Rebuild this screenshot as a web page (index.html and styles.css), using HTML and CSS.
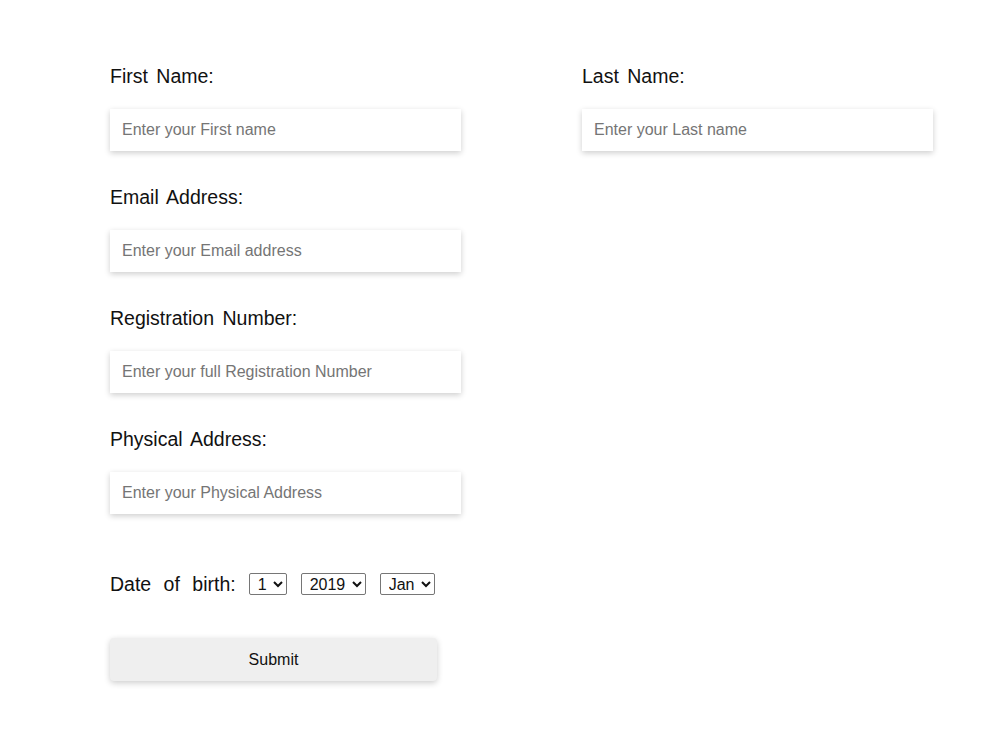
FILE: index.html
```html
<!DOCTYPE html>
<html>
<head>
<meta charset="utf-8">
<link rel="stylesheet" href="styles.css">
</head>
<body>
<form class="form">
  <div class="grid">
    <div class="field">
      <label class="label">First Name:</label>
      <input class="input" type="text" placeholder="Enter your First name">
    </div>
    <div class="field">
      <label class="label">Last Name:</label>
      <input class="input" type="text" placeholder="Enter your Last name">
    </div>
    <div class="field">
      <label class="label">Email Address:</label>
      <input class="input" type="text" placeholder="Enter your Email address">
    </div>
    <div></div>
    <div class="field">
      <label class="label">Registration Number:</label>
      <input class="input" type="text" placeholder="Enter your full Registration Number">
    </div>
    <div></div>
    <div class="field">
      <label class="label">Physical Address:</label>
      <input class="input" type="text" placeholder="Enter your Physical Address">
    </div>
    <div></div>
  </div>
  <div class="dob">
    <span class="label dob-label">Date of birth:</span>
    <select class="sel"><option>1</option></select>
    <select class="sel"><option>2019</option></select>
    <select class="sel"><option>Jan</option></select>
  </div>
  <button class="submit" type="button">Submit</button>
</form>
</body>
</html>
```
FILE: styles.css
```css
html, body {
  margin: 0;
  background: #ffffff;
}
body {
  font-family: "Liberation Sans", Arial, sans-serif;
  color: #111;
}
.form {
  padding: 65px 0 60px 110px;
}
.grid {
  display: grid;
  grid-template-columns: 472px 351px;
  row-gap: 35px;
}
.field {
  display: flex;
  flex-direction: column;
  align-items: flex-start;
}
.label {
  font-size: 19.5px;
  line-height: 22px;
  word-spacing: 3px;
  color: #111;
}
.field .label {
  margin-bottom: 22px;
}
.input {
  width: 351px;
  height: 42px;
  box-sizing: border-box;
  border: none;
  outline: none;
  padding: 0 12px;
  font-family: "Liberation Sans", Arial, sans-serif;
  font-size: 16px;
  background: #fff;
  box-shadow: 0 2px 6px rgba(0, 0, 0, 0.2);
}
.input::placeholder {
  color: #757575;
}
.dob {
  display: flex;
  align-items: center;
  gap: 14px;
  margin-top: 59px;
}
.dob-label {
  word-spacing: 7px;
  margin-right: -1px;
}
.sel {
  font-family: "Liberation Sans", Arial, sans-serif;
  font-size: 16px;
  height: 22px;
  padding: 0 3px 0 4px;
  border: 1px solid #767676;
  border-radius: 2px;
  background: #fff;
  color: #111;
}
.submit {
  display: block;
  margin-top: 43px;
  width: 327px;
  height: 43px;
  border: none;
  border-radius: 4px;
  background: #efefef;
  font-family: "Liberation Sans", Arial, sans-serif;
  font-size: 16px;
  color: #111;
  box-shadow: 0 2px 6px rgba(0, 0, 0, 0.2);
}
```
